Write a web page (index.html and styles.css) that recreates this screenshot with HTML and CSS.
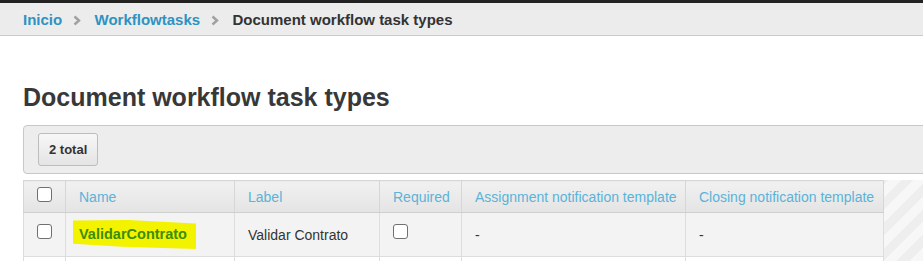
FILE: index.html
```html
<!DOCTYPE html>
<html lang="en">
<head>
  <meta charset="UTF-8">
  <meta name="viewport" content="width=device-width, initial-scale=1.0">
  <title>Document workflow task types</title>
  <link rel="stylesheet" href="styles.css">
</head>
<body>
  <div class="topbar"></div>
  <!-- Breadcrumb -->
  <nav class="breadcrumb">
    <a href="#">Inicio</a>
    <svg class="sep" width="8" height="11" viewBox="0 0 8 11"><polyline points="1.5,1.5 6,5.5 1.5,9.5" fill="none" stroke="#a0a0a0" stroke-width="2.4"/></svg>
    <a href="#">Workflowtasks</a>
    <svg class="sep" width="8" height="11" viewBox="0 0 8 11"><polyline points="1.5,1.5 6,5.5 1.5,9.5" fill="none" stroke="#a0a0a0" stroke-width="2.4"/></svg>
    <span class="current">Document workflow task types</span>
  </nav>
  <main class="content">
    <h1>Document workflow task types</h1>
    <div class="toolbar">
      <button class="btn">2 total</button>
    </div>
    <div class="grid">
      <table>
        <colgroup>
          <col class="c-check">
          <col class="c-name">
          <col class="c-label">
          <col class="c-required">
          <col class="c-assign">
          <col class="c-closing">
        </colgroup>
        <thead>
          <tr>
            <th class="check"><span class="box"></span></th>
            <th>Name</th>
            <th>Label</th>
            <th>Required</th>
            <th>Assignment notification template</th>
            <th>Closing notification template</th>
          </tr>
        </thead>
        <tbody>
          <tr class="odd">
            <td class="check"><span class="box"></span></td>
            <td><a href="#" class="name"><span class="marker">ValidarContrato</span></a></td>
            <td>Validar Contrato</td>
            <td class="check-left"><span class="box"></span></td>
            <td>-</td>
            <td>-</td>
          </tr>
          <tr>
            <td class="check"></td>
            <td></td>
            <td></td>
            <td></td>
            <td></td>
            <td></td>
          </tr>
        </tbody>
      </table>
    </div>
  </main>
</body>
</html>
```

FILE: styles.css
```css
body {
  margin: 0;
  font-family: "Liberation Sans", Arial, sans-serif;
  font-size: 14px;
  color: #333;
  background-color: #fff;
  overflow: hidden;
}
a {
  text-decoration: none;
}
.topbar {
  height: 3px;
  background-color: #222;
}
.breadcrumb {
  height: 32px;
  line-height: 33px;
  padding-left: 23px;
  background-color: #ececec;
  border-bottom: 1px solid #cacaca;
  font-weight: bold;
  font-size: 15px;
}
.breadcrumb a {
  color: #2e93c2; /* link blue */
}
.breadcrumb .sep {
  margin: 0 9px 0 7px;
  vertical-align: -1px;
}
.breadcrumb .current {
  color: #333;
}
.content {
  width: 1000px;
  padding-left: 23px;
}
h1 {
  font-size: 25px;
  line-height: 28px;
  margin: 47px 0 14px;
  color: #383838;
}
.toolbar {
  background-color: #ededed;
  border: 1px solid #c8c8c8;
  border-radius: 4px;
  padding: 7px 14px 7px;
}
.btn {
  font-family: inherit;
  font-size: 13px;
  font-weight: bold;
  color: #333;
  height: 33px;
  padding: 0 10px;
  background: linear-gradient(#f7f7f7, #e4e4e4);
  border: 1px solid #bdbdbd;
  border-radius: 3px;
  vertical-align: top;
}
.grid {
  margin-top: 6px;
  background: repeating-linear-gradient(135deg, #f7f7f7 0 9px, #eeeeee 9px 18px);
}
table {
  width: 861px;
  table-layout: fixed;
  border-collapse: collapse;
  border: 1px solid #d0d0d0;
  background-color: #fff;
}
.c-check { width: 42px; }
.c-name { width: 169px; }
.c-label { width: 145px; }
.c-required { width: 82px; }
.c-assign { width: 224px; }
.c-closing { width: 198px; }
th {
  height: 31px;
  padding: 0 13px;
  text-align: left;
  font-weight: normal;
  color: #5ab3d8;
  white-space: nowrap;
  background: linear-gradient(#f1f1f1, #e4e4e4);
  border: 1px solid #d6d6d6;
  border-bottom-color: #cfcfcf;
}
td {
  height: 43px;
  padding: 0 13px;
  border: 1px solid #dddddd;
  color: #333;
}
tr.odd td {
  background-color: #f3f3f3;
}
.check {
  text-align: center;
  padding: 0;
}
.check-left {
  padding-left: 13px;
}
.box {
  display: inline-block;
  width: 13px;
  height: 13px;
  border: 1px solid #707070;
  border-radius: 3px;
  background-color: #fff;
  position: relative;
  top: -4px;
  vertical-align: middle;
}
th .box {
  top: -3px;
}
.name {
  font-weight: bold;
  font-size: 14.5px;
  color: #3c8d0a;
}
/* hand drawn yellow marker over the link */
.marker {
  display: inline-block;
  margin-left: -6px;
  padding: 6px 9px 7px 6px;
  background-color: #f3f300;
  clip-path: polygon(0 2%, 45% 0, 100% 12%, 100% 100%, 40% 92%, 0 82%);
}
```
